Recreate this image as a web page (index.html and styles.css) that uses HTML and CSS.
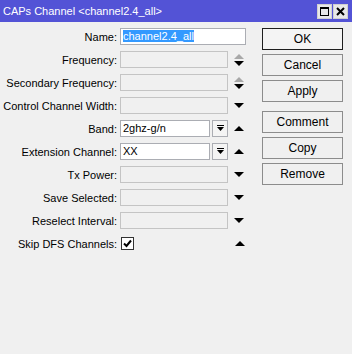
FILE: index.html
```html
<!DOCTYPE html>
<html lang="en">
<head>
  <meta charset="UTF-8" />
  <title>CAPs Channel</title>
  <link rel="stylesheet" href="styles.css">
</head>
<body>

  <div class="titlebar">
    <span class="title">CAPs Channel &lt;channel2.4_all&gt;</span>
    <div class="winbtns">
      <span class="winbtn">
        <svg width="13" height="13" viewBox="0 0 13 13"><rect x="2.5" y="2.5" width="8" height="8" fill="none" stroke="#000" stroke-width="1"/><rect x="2" y="2" width="9" height="2" fill="#000"/></svg>
      </span>
      <span class="winbtn">
        <svg width="13" height="13" viewBox="0 0 13 13"><path d="M3 3 L10 10 M10 3 L3 10" stroke="#000" stroke-width="2"/></svg>
      </span>
    </div>
  </div>

  <div class="content">
    <div class="form">
      <div class="row">
        <label>Name:</label>
        <div class="field wide"><span class="sel">channel2.4_all</span></div>
      </div>
      <div class="row">
        <label>Frequency:</label>
        <div class="field off"></div>
        <div class="arrows"><span class="up grey"></span><span class="down"></span></div>
      </div>
      <div class="row">
        <label>Secondary Frequency:</label>
        <div class="field off"></div>
        <div class="arrows"><span class="up grey"></span><span class="down"></span></div>
      </div>
      <div class="row">
        <label>Control Channel Width:</label>
        <div class="field off"></div>
        <div class="arrows"><span class="down"></span></div>
      </div>
      <div class="row">
        <label>Band:</label>
        <div class="combo">
          <div class="field">2ghz-g/n</div>
          <span class="dd">
            <svg width="9" height="9" viewBox="0 0 9 9"><rect x="1" y="1" width="7" height="1" fill="#000"/><path d="M1 3 H8 L4.5 7 Z" fill="#000"/></svg>
          </span>
        </div>
        <div class="arrows"><span class="up"></span></div>
      </div>
      <div class="row">
        <label>Extension Channel:</label>
        <div class="combo">
          <div class="field">XX</div>
          <span class="dd">
            <svg width="9" height="9" viewBox="0 0 9 9"><rect x="1" y="1" width="7" height="1" fill="#000"/><path d="M1 3 H8 L4.5 7 Z" fill="#000"/></svg>
          </span>
        </div>
        <div class="arrows"><span class="up"></span></div>
      </div>
      <div class="row">
        <label>Tx Power:</label>
        <div class="field off"></div>
        <div class="arrows"><span class="down"></span></div>
      </div>
      <div class="row">
        <label>Save Selected:</label>
        <div class="field off"></div>
        <div class="arrows"><span class="down"></span></div>
      </div>
      <div class="row">
        <label>Reselect Interval:</label>
        <div class="field off"></div>
        <div class="arrows"><span class="down"></span></div>
      </div>
      <div class="row">
        <label>Skip DFS Channels:</label>
        <div class="checkcell">
          <span class="check">
            <svg width="11" height="11" viewBox="0 0 11 11"><path d="M2 5.5 L4.5 8 L9 2.5" fill="none" stroke="#000" stroke-width="2"/></svg>
          </span>
        </div>
        <div class="arrows"><span class="up"></span></div>
      </div>
    </div>

    <div class="buttons">
      <button class="btn default">OK</button>
      <button class="btn">Cancel</button>
      <button class="btn">Apply</button>
      <button class="btn sep">Comment</button>
      <button class="btn">Copy</button>
      <button class="btn">Remove</button>
    </div>
  </div>

</body>
</html>
```

FILE: styles.css
```css
body {
  margin: 0;
  padding: 0;
  background: #f0f0f0;
  font-family: "Liberation Sans", Arial, sans-serif;
  font-size: 11px;
  color: #000;
}

.titlebar {
  height: 22px;
  background: #5353d6;
  display: flex;
  align-items: center;
  justify-content: space-between;
  padding: 0 4px 0 3px;
}

.title {
  color: #fff;
  font-size: 11px;
}

.winbtns {
  display: flex;
  gap: 1px;
}

.winbtn {
  width: 13px;
  height: 13px;
  background: #e8e8e8;
  border: 1px solid #d0d0d0;
  display: flex;
}

.content {
  display: flex;
  padding-top: 3px;
}

.form {
  width: 262px;
  flex-shrink: 0;
}

.row {
  display: flex;
  align-items: center;
  height: 23px;
}

.row label {
  width: 117px;
  flex-shrink: 0;
  text-align: right;
  padding-right: 3px;
  white-space: nowrap;
}

.field {
  width: 108px;
  height: 17px;
  flex-shrink: 0;
  box-sizing: border-box;
  border: 1px solid #abadb3;
  background: #fff;
  padding: 0 2px;
  line-height: 15px;
  white-space: nowrap;
  overflow: hidden;
}

.field.off {
  background: #f0f0f0;
  border-color: #c4c4c4;
}

.field.wide {
  width: 126px;
}

.sel {
  background: #3399ff;
  color: #fff;
}

.combo {
  display: flex;
  gap: 2px;
  width: 108px;
  flex-shrink: 0;
}

.combo .field {
  width: 90px;
}

.dd {
  width: 16px;
  height: 17px;
  box-sizing: border-box;
  border: 1px solid #abadb3;
  background: #f4f4f4;
  display: flex;
  align-items: center;
  justify-content: center;
}

.arrows {
  width: 22px;
  display: flex;
  flex-direction: column;
  align-items: center;
  gap: 2px;
}

.up, .down {
  width: 0;
  height: 0;
  border-left: 5px solid transparent;
  border-right: 5px solid transparent;
}

.up {
  border-bottom: 5px solid #000;
}

.up.grey {
  border-bottom-color: #a8a8a8;
}

.down {
  border-top: 5px solid #000;
}

.checkcell {
  width: 108px;
  flex-shrink: 0;
  display: flex;
  padding-left: 1px;
}

.check {
  width: 13px;
  height: 13px;
  box-sizing: border-box;
  border: 1px solid #333;
  background: #fff;
  display: flex;
  align-items: center;
  justify-content: center;
}

.buttons {
  display: flex;
  flex-direction: column;
  gap: 4px;
  padding-top: 3px;
}

.btn {
  width: 81px;
  height: 22px;
  font-family: "Liberation Sans", Arial, sans-serif;
  font-size: 12px;
  color: #000;
  background: #f0f0f0;
  border: 1px solid #8c8c8c;
  padding: 0;
}

.btn.default {
  border-color: #1e1e1e;
  background: #f4f4f4;
}

.btn.sep {
  margin-top: 5px;
}
```
